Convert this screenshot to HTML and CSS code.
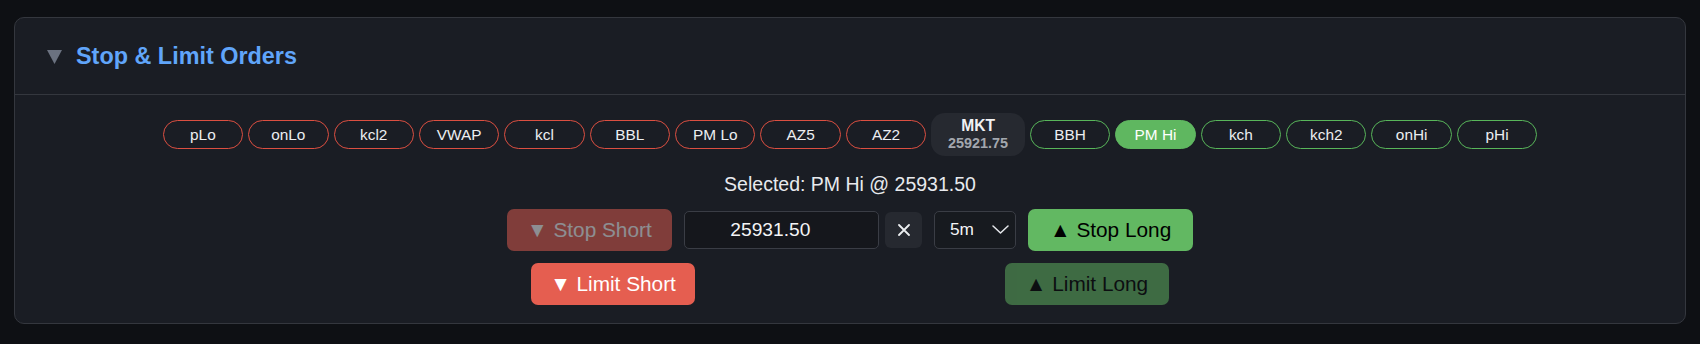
FILE: index.html
```html
<!DOCTYPE html>
<html lang="en">
<head>
<meta charset="utf-8">
<title>Stop &amp; Limit Orders</title>
<link rel="stylesheet" href="styles.css">
</head>
<body>
<div class="page">
  <section class="panel">
    <header class="panel-header">
      <svg class="caret" width="15" height="14" viewBox="0 0 15 14"><polygon points="0,0 15,0 7.5,14" fill="#6b7280"/></svg>
      <h2 class="title">Stop &amp; Limit Orders</h2>
    </header>
    <div class="panel-body">
      <div class="levels">
        <button class="pill pill-short">pLo</button>
        <button class="pill pill-short">onLo</button>
        <button class="pill pill-short">kcl2</button>
        <button class="pill pill-short">VWAP</button>
        <button class="pill pill-short">kcl</button>
        <button class="pill pill-short">BBL</button>
        <button class="pill pill-short">PM Lo</button>
        <button class="pill pill-short">AZ5</button>
        <button class="pill pill-short">AZ2</button>
        <div class="mkt">
          <div class="mkt-label">MKT</div>
          <div class="mkt-price">25921.75</div>
        </div>
        <button class="pill pill-long">BBH</button>
        <button class="pill pill-long pill-active">PM Hi</button>
        <button class="pill pill-long">kch</button>
        <button class="pill pill-long">kch2</button>
        <button class="pill pill-long">onHi</button>
        <button class="pill pill-long">pHi</button>
      </div>
      <div class="selected">Selected: PM Hi @ 25931.50</div>
      <div class="order-row">
        <button class="btn btn-short is-disabled">▼ Stop Short</button>
        <div class="price-group">
          <input class="price-input" type="text" value="25931.50">
          <button class="clear-btn" aria-label="Clear">
            <svg width="12" height="12" viewBox="0 0 12 12"><path d="M1 1 L11 11 M11 1 L1 11" stroke="#eceef1" stroke-width="1.8" stroke-linecap="round" fill="none"/></svg>
          </button>
        </div>
        <div class="tf-select">
          <span>5m</span>
          <svg width="17" height="9" viewBox="0 0 17 9"><path d="M1 1 L8.5 8 L16 1" stroke="#e5e7eb" stroke-width="1.5" stroke-linecap="round" stroke-linejoin="round" fill="none"/></svg>
        </div>
        <button class="btn btn-long">▲ Stop Long</button>
      </div>
      <div class="order-row order-row-limit">
        <button class="btn btn-short">▼ Limit Short</button>
        <button class="btn btn-long is-disabled">▲ Limit Long</button>
      </div>
    </div>
  </section>
</div>
</body>
</html>
```

FILE: styles.css
```css
* {
  box-sizing: border-box;
}

body {
  margin: 0;
  background: #0e1014;
  font-family: "Liberation Sans", Arial, sans-serif;
}

.page {
  padding: 17px 14px 0;
}

.panel {
  background: #1a1d24;
  border: 1px solid #34373e;
  border-radius: 10px;
}

.panel-header {
  height: 77px;
  border-bottom: 1px solid #34373e;
  display: flex;
  align-items: center;
  gap: 14px;
  padding-left: 32px;
}

.caret {
  display: block;
  margin-top: 1px;
}

.title {
  margin: 0;
  font-family: "Liberation Sans", Arial, sans-serif;
  font-weight: 700;
  font-size: 23.4px;
  color: #60a5fa;
}

.panel-body {
  padding: 18px 0 18px;
  display: flex;
  flex-direction: column;
  align-items: center;
}

.levels {
  display: flex;
  align-items: center;
  gap: 5px;
}

.pill {
  width: 80.4px;
  height: 29px;
  padding: 0;
  border-radius: 15px;
  border: 1px solid;
  background: transparent;
  color: #eceef1;
  font-family: "Liberation Sans", Arial, sans-serif;
  font-size: 15.4px;
}

.pill-short {
  border-color: #dc4f41;
}

.pill-long {
  border-color: #58b65a;
}

.pill-active {
  background: #5fb760;
  border-color: #5fb760;
  color: #ffffff;
}

.mkt {
  width: 93.7px;
  height: 43.3px;
  border-radius: 14px;
  background: #262930;
  display: flex;
  flex-direction: column;
  align-items: center;
  justify-content: center;
}

.mkt-label {
  font-weight: 700;
  font-size: 15.6px;
  line-height: 18px;
  color: #f1f2f4;
}

.mkt-price {
  font-weight: 700;
  font-size: 14.4px;
  line-height: 17px;
  color: #a3a7ae;
}

.selected {
  margin: 17px 0 14px;
  font-size: 19.5px;
  line-height: 22px;
  color: #e8eaee;
}

.order-row {
  display: flex;
  align-items: center;
  gap: 12.6px;
}

.order-row-limit {
  gap: 309.6px;
  margin-top: 12.6px;
}

.btn {
  width: 164.4px;
  height: 41.4px;
  padding: 0;
  border: none;
  border-radius: 7px;
  font-family: "Liberation Sans", Arial, sans-serif;
  font-size: 20.8px;
}

.btn-short {
  background: #e55e50;
  color: #ffffff;
}

.btn-long {
  background: #62b862;
  color: #000000;
}

.is-disabled {
  opacity: 0.5;
}

.price-group {
  display: flex;
  align-items: center;
  gap: 6.6px;
}

.price-input {
  width: 194.4px;
  height: 38px;
  border: 1px solid #3a3d45;
  border-radius: 5px;
  background: #15171c;
  color: #f3f4f6;
  font-family: "Liberation Sans", Arial, sans-serif;
  font-size: 19.2px;
  text-align: center;
  padding: 0 28px 0 6px;
  outline: none;
}

.clear-btn {
  width: 36.7px;
  height: 35.3px;
  padding: 0;
  border: none;
  border-radius: 6px;
  background: #262930;
  display: flex;
  align-items: center;
  justify-content: center;
}

.clear-btn svg {
  display: block;
}

.tf-select {
  width: 81.4px;
  height: 38px;
  border: 1px solid #3a3d45;
  border-radius: 5px;
  background: #171a1f;
  display: flex;
  align-items: center;
  justify-content: space-between;
  padding: 0 6px 0 14.5px;
  color: #f3f4f6;
  font-size: 17.3px;
}

.tf-select svg {
  display: block;
}
```
